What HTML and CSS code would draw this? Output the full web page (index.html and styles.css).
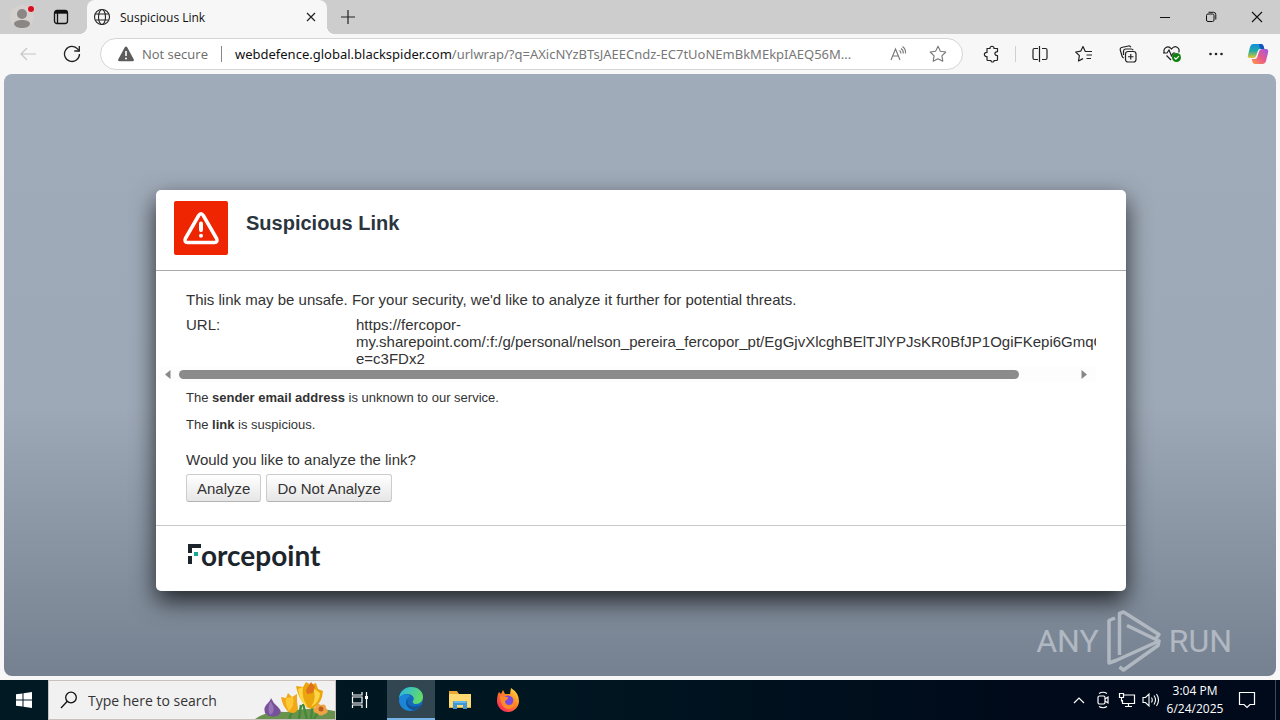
FILE: index.html
```html
<!DOCTYPE html>
<html lang="en">
<head>
<meta charset="utf-8">
<title>Suspicious Link</title>
<link rel="stylesheet" href="styles.css">
</head>
<body>
<header class="tabbar">
  <button class="tab-tool profile" aria-label="Profile"><svg width="26" height="26" viewBox="0 0 26 26"><circle cx="13" cy="13" r="12" fill="#d4d1ce"/><circle cx="13" cy="10" r="5" fill="#8b8785"/><path d="M5 20c0-3 4-4 8-4s8 1 8 4c-1 3-4 4-8 4s-7-1-8-4z" fill="#8b8785"/><circle cx="22" cy="5" r="4" fill="#e3cccc"/><circle cx="22" cy="5" r="3" fill="#d80f20"/></svg></button>
  <button class="tab-tool" aria-label="Tab actions"><svg width="16" height="16" viewBox="0 0 16 16" fill="none" stroke="#111" stroke-width="1.3"><rect x="1.500" y="1.500" width="13" height="13" rx="2.500"/><path d="M2 3.300h12" stroke-width="2.800"/><path d="M4.500 4v10"/></svg></button>
  <div class="tab">
    <svg width="18" height="18" viewBox="0 0 18 18" fill="none" stroke="#222" stroke-width="1.1"><circle cx="9" cy="9" r="7.500"/><ellipse cx="9" cy="9" rx="3.500" ry="7.500"/><path d="M2.300 6h13.400M2.300 12h13.400"/></svg>
    <span class="tab-title">Suspicious Link</span>
    <button class="tab-close" aria-label="Close tab"><svg width="10" height="10" viewBox="0 0 10 10" stroke="#222" stroke-width="1.2"><path d="M1 1l8 8M9 1L1 9"/></svg></button>
  </div>
  <button class="tab-new" aria-label="New tab"><svg width="14" height="14" viewBox="0 0 14 14" stroke="#222" stroke-width="1.2"><path d="M7 0v14M0 7h14"/></svg></button>
  <div class="window-controls">
    <button aria-label="Minimize"><svg width="12" height="12" viewBox="0 0 12 12"><path d="M1 6.500h10" stroke="#111"/></svg></button>
    <button aria-label="Restore"><svg width="12" height="12" viewBox="0 0 12 12" fill="none" stroke="#111"><rect x="1.500" y="3" width="7.500" height="7.500" rx="1.500"/><path d="M3.500 1.300H8.500a2.300 2.300 0 0 1 2.300 2.300V8.500"/></svg></button>
    <button aria-label="Close"><svg width="12" height="12" viewBox="0 0 12 12" stroke="#111" stroke-width="1.100"><path d="M1 1l10 10M11 1L1 11"/></svg></button>
  </div>
</header>

<nav class="toolbar">
  <button class="tool" aria-label="Back" disabled><svg width="16" height="14" viewBox="0 0 16 14" fill="none" stroke="#c6c6c6" stroke-width="1.200"><path d="M16 7H1M7 1L1 7l6 6"/></svg></button>
  <button class="tool" aria-label="Refresh"><svg width="18" height="18" viewBox="0 0 18 18" fill="none" stroke="#222" stroke-width="1.300"><path d="M16.500 9A7.500 7.500 0 1 1 14.800 4.200L16.300 6"/><path d="M16.300 1v5h-5"/></svg></button>
  <div class="address">
    <button class="security"><svg width="16" height="16" viewBox="0 0 16 16"><path d="M8 .5q.8 0 1.200.8l6.500 12q.8 2-1.200 2h-13q-2 0-1.200-2l6.500-12Q7.200.5 8 .5z" fill="#5c5c5c"/><path d="M8 5v5" stroke="#fff" stroke-width="1.600"/><circle cx="8" cy="12.400" r="1" fill="#fff"/></svg><span>Not secure</span></button>
    <span class="address-rule"></span>
    <div class="url" role="textbox" aria-label="Address"><span class="host">webdefence.global.blackspider.com</span>/urlwrap/?q=AXicNYzBTsJAEECndz-EC7tUoNEmBkMEkpIAEQ56M...</div>
    <button class="inline-tool" aria-label="Read aloud"><svg width="17" height="16" viewBox="0 0 17 16" fill="none" stroke="#777" stroke-width="1.100"><path d="M1 14L5.500 3l4.500 11M2.700 10h5.600M9.500 4.500q1.500 1 1.500 3M11 2.500q2.500 1.500 2.300 5M12.500.5q3.500 2.500 3 7"/></svg></button>
    <button class="inline-tool" aria-label="Favorite"><svg width="18" height="18" viewBox="0 0 18 18" fill="none" stroke="#777" stroke-width="1.100" stroke-linejoin="round"><path d="M9 1.300l2.400 4.900 5.400.8-3.900 3.800.9 5.400L9 13.700l-4.800 2.500.9-5.400L1.200 7l5.400-.8z"/></svg></button>
  </div>
  <button class="tool" aria-label="Extensions"><svg width="18" height="18" viewBox="0 0 18 18" fill="none" stroke="#222" stroke-width="1.200" stroke-linejoin="round"><path d="M4 3.500h3c-.5-3 4.500-3 4 0h3.500v3.200c-3.500-.3-3.500 4 0 3.800V14.500q0 1-1 1h-2.500c.5 2-3.500 2-3 0H5q-1 0-1-1v-3c-3.500.5-3.500-4.500 0-4z"/></svg></button>
  <span class="tool-rule"></span>
  <button class="tool" aria-label="Split screen"><svg width="16" height="16" viewBox="0 0 16 16" fill="none" stroke="#222" stroke-width="1.200"><path d="M6 2.500H2.500Q1 2.500 1 4v8q0 1.500 1.500 1.500H6M10 2.500h3.500Q15 2.500 15 4v8q0 1.500-1.500 1.500H10M7.500 0v16"/></svg></button>
  <button class="tool" aria-label="Favorites"><svg width="18" height="18" viewBox="0 0 18 18" fill="none" stroke="#222" stroke-width="1.200" stroke-linejoin="round"><path d="M17 6.500h-6.700L8 1.500 5.700 6.200l-5 .8 3.700 3.600-.9 5.400L8 13.600M11.500 10H17M11.500 13.500H16"/></svg></button>
  <button class="tool" aria-label="Collections"><svg width="18" height="18" viewBox="0 0 18 18" fill="none" stroke="#222" stroke-width="1.200"><rect x="6.500" y="6.500" width="10.500" height="10.500" rx="2.500"/><path d="M11.750 9v5.500M9 11.750h5.500M4.800 13Q3.500 12.700 3 11L1.200 4.800Q1 3 2.500 2.500L9.500 1q1.800-.2 2.300 1.300M4.500 10V6q.2-1.700 2-2h5.700q1.500.1 2 1.200"/></svg></button>
  <button class="tool" aria-label="Browser essentials"><svg width="18" height="18" viewBox="0 0 18 18" fill="none" stroke="#222" stroke-width="1.200"><path d="M1.400 8C-.5 3 5-.5 8.500 4 12-.5 17.500 2.500 15.700 7.500M3.500 10.500l4.500 4.500M0 8h4l2-3 2.500 6 1.800-3h2"/><circle cx="13.500" cy="12.500" r="4.500" fill="#118011" stroke="none"/><path d="M11.300 12.500l1.600 1.600 3-3" stroke="#fff"/></svg></button>
  <button class="tool" aria-label="Settings and more"><svg width="16" height="4" viewBox="0 0 16 4" fill="#222"><circle cx="2.500" cy="2" r="1.300"/><circle cx="8" cy="2" r="1.300"/><circle cx="13.500" cy="2" r="1.300"/></svg></button>
  <button class="tool copilot" aria-label="Copilot"><svg width="22" height="22" viewBox="0 0 22 22"><defs><linearGradient id="ca" x1="0" y1="0" x2="0" y2="1"><stop offset="0" stop-color="#168ee0"/><stop offset=".5" stop-color="#22a9a4"/><stop offset="1" stop-color="#e5c72d"/></linearGradient><linearGradient id="cb" x1="1" y1="0" x2="0" y2="1"><stop offset="0" stop-color="#9a59e8"/><stop offset=".5" stop-color="#e8588c"/><stop offset="1" stop-color="#ff9a45"/></linearGradient></defs><path d="M6 1h8q2 0 2.500 2l.8 3h-4q-2 0-2.500 2l-1.700 5q-.8 2-3 2H3q-3 0-2-3L3 4q.8-3 3-3z" fill="url(#ca)"/><path d="M12 1h2q2 0 2.500 2l.8 3h-3Q13 6 12.500 4z" fill="#1554c0"/><path d="M16 21H8q-2 0-2.500-2l-.8-3h3q2 0 2.600-2L12 8.500Q12.800 6 15 6h4q3 0 2 4l-2 8q-.8 3-3 3z" fill="url(#cb)"/></svg></button>
</nav>

<main class="viewport">
  <section class="card">
    <header class="card-head">
      <svg class="alert-icon" width="54" height="54" viewBox="0 0 54 54"><rect width="54" height="54" rx="2" fill="#ef2400"/><path d="M24.700 14.500q2.300-3.500 4.600 0l13.300 23q1.600 3.700-2.300 4H13.700q-3.900-.3-2.300-4z" fill="none" stroke="#fff" stroke-width="3.500" stroke-linejoin="round"/><path d="M27 22.500v6.500" stroke="#fff" stroke-width="4" stroke-linecap="round"/><circle cx="27" cy="34.800" r="2" fill="#fff"/></svg>
      <h1>Suspicious Link</h1>
    </header>
    <div class="card-body">
      <p class="lead">This link may be unsafe. For your security, we'd like to analyze it further for potential threats.</p>
      <div class="scroll-box">
        <dl class="url-row"><dt>URL:</dt><dd>https://fercopor-<br>my.sharepoint.com/:f:/g/personal/nelson_pereira_fercopor_pt/EgGjvXlcghBElTJlYPJsKR0BfJP1OgiFKepi6GmqQ<br>e=c3FDx2</dd></dl>
        <div class="scrollbar"><svg width="6" height="9" viewBox="0 0 6 9"><path d="M5.500 0v9L0 4.500z" fill="#888"/></svg><div class="track"><div class="thumb"></div></div><svg width="6" height="9" viewBox="0 0 6 9"><path d="M.5 0v9L6 4.500z" fill="#888"/></svg></div>
      </div>
      <div class="notes">
        <p>The <b>sender email address</b> is unknown to our service.</p>
        <p>The <b>link</b> is suspicious.</p>
      </div>
      <p class="question">Would you like to analyze the link?</p>
      <div class="actions"><button>Analyze</button><button>Do Not Analyze</button></div>
    </div>
    <footer class="card-foot">
      <div class="brand" role="img" aria-label="Forcepoint"><svg width="13" height="21" viewBox="0 0 13 21"><path d="M0 0h13v4H4v5H0zM0 12h4v8H0z" fill="#1d252c"/><rect x="6" y="8" width="4" height="4" fill="#16a893"/></svg><span>orcepoint</span></div>
    </footer>
  </section>
  <div class="watermark"><span>ANY</span><svg width="54" height="62" viewBox="0 0 54 62" fill="none" stroke="#c3c9d1" stroke-width="3.500" stroke-linejoin="round"><path d="M8 8L2 10.500V53l7-2.500 43-19.500L20 15.500M12.500 45V3.500l4-1.500L52 24.500l-3 4M12.500 57l4 3L51 35.500l1-4.500"/></svg><span>RUN</span></div>
</main>

<footer class="taskbar">
  <button class="start" aria-label="Start"><svg width="16" height="16" viewBox="0 0 16 16" fill="#fff"><path d="M0 2.300l6.500-.9v6.100H0zM7.500 1.200L16 0v7.500H7.500zM0 8.500h6.500v6.100L0 13.700zM7.500 8.500H16V16l-8.500-1.200z"/></svg></button>
  <div class="search">
    <svg width="18" height="18" viewBox="0 0 18 18" fill="none" stroke="#111" stroke-width="1.300"><circle cx="11" cy="6.500" r="5.300"/><path d="M7.300 10.300L1 17"/></svg>
    <input type="text" placeholder="Type here to search" aria-label="Type here to search">
    <svg class="flowers" width="80" height="38" viewBox="0 0 80 38"><path d="M0 38q12-9 31-7 25-6 49-1v8z" fill="#68924e"/><path d="M44 38l2-14M56 38l2-17M35 38q-1-6 7-10M65 30q-3 2-6 8M48 23l4 15" fill="none" stroke="#438b38" stroke-width="2.500"/><path d="M16 17q2 5 7 9 6 6-1 9-8 2-12-3-2-6 3-10 3-3 3-5z" fill="#76529b"/><path d="M15 21q-3 8 0 13 7-4 1-13z" fill="#9975b8"/><path d="M26 16l5 1 2-5 4 4 5-3v7l1 8q-3 6-9 3-6-4-8-15z" fill="#f2a719"/><path d="M31 17q-1 8 3 13 6-5 4-14z" fill="#fdc735"/><path d="M41 5l7 1 3-5 5 3 5-2 2 6 5 2q-1 12-9 17-6 2-10-4-6-7-8-18z" fill="#eaa50f"/><path d="M48 6q-2 11 5 20-8-3-10-18zM57 6q6 10-1 20 9-5 9-14z" fill="#ffd644"/><path d="M51 9l5-8 4 5-2 6-6 1z" fill="#df731b"/><path d="M59 31q-2-4 2-5 1-5 5-2 5-2 5 3 4 4-1 6-5 3-7 0z" fill="#eda444"/><circle cx="66" cy="28" r="2.500" fill="#bd5c20"/></svg>
  </div>
  <button class="task" aria-label="Task view"><svg width="18" height="18" viewBox="0 0 18 18" fill="none" stroke="#fff" stroke-width="1.200"><path d="M1.500 1v3H11V1M1.500 17v-3H11v3M1.500 6H11v6H1.500zM15.500 1v16"/><path d="M14 5h3v3h-3z" fill="#fff" stroke="none"/></svg></button>
  <button class="task active" aria-label="Edge"><svg width="24" height="24" viewBox="0 0 24 24"><defs><linearGradient id="ea" x1="0" y1="0" x2="1" y2=".4"><stop offset="0" stop-color="#26b5e8"/><stop offset="1" stop-color="#62d96b"/></linearGradient></defs><circle cx="12" cy="12" r="12" fill="#1369bd"/><path d="M0 11C1 4 6 0 12 0c8 0 12 5 12 10 0 4-3 7-7 7-3 0-4-2-3-3 4-5-7-11-14-3z" fill="url(#ea)"/><path d="M9 11c-5 5 0 12 6 12-8 3-15-3-15-10C1 7 8 6 11 9z" fill="#1b86d8"/><path d="M9 11c-3 7 4 11 13 7-2 3-5 5-8 5-6-1-9-8-5-12z" fill="#145292"/></svg></button>
  <button class="task" aria-label="File Explorer"><svg width="22" height="20" viewBox="0 0 22 20"><path d="M0 1h8l2 3h12v14H0z" fill="#e9a937"/><path d="M0 4h22v13H0z" fill="#ffda72"/><path d="M4 19v-7q0-1 1-1h12q1 0 1 1v7h-4v-4H8v4z" fill="#3d99d4"/><path d="M5 11h12v2H5z" fill="#64b9e9"/></svg></button>
  <button class="task" aria-label="Firefox"><svg width="24" height="24" viewBox="0 0 24 24"><defs><linearGradient id="fa" x1="1" y1="0" x2=".2" y2="1"><stop offset="0" stop-color="#fff04b"/><stop offset=".45" stop-color="#ff8b22"/><stop offset="1" stop-color="#f9235d"/></linearGradient></defs><path d="M2 6l1-2 2 2 2-4 2 4h5l1-6q8 5 8 13c0 6-5 11-11 11S1 19 1 13q0-4 1-7z" fill="url(#fa)"/><circle cx="12" cy="13" r="5.500" fill="#774be0"/><path d="M4 8l7 1q3 1-2 4 0 4 4 4 5 0 4-6 4 9-4 10Q5 21 4 8z" fill="#ff8a29"/></svg></button>
  <div class="tray">
    <button aria-label="Show hidden icons"><svg width="12" height="8" viewBox="0 0 12 8" fill="none" stroke="#fff" stroke-width="1.200"><path d="M1 7l5-5 5 5"/></svg></button>
    <button aria-label="Meet now"><svg width="14" height="18" viewBox="0 0 14 18" fill="none" stroke="#fff" stroke-width="1.200"><rect x="2" y="5" width="7" height="8" rx="1.500"/><path d="M9 8l3-2v6l-3-2M3 2.500q4-2.500 8 0M3 15.500q4 2.500 8 0"/></svg></button>
    <button aria-label="Network"><svg width="18" height="16" viewBox="0 0 18 16" fill="none" stroke="#fff" stroke-width="1.200"><path d="M6 3h10.500v8.500h-12V8M10.500 12v3M7 14.500h7M1.500 1.500h4v4h-4zM3.500 6v3h1"/></svg></button>
    <button aria-label="Volume"><svg width="18" height="16" viewBox="0 0 18 16" fill="none" stroke="#fff" stroke-width="1.100"><path d="M1 5.500h2.500L7 2v12l-3.500-3.500H1zM9.500 5.500q1.500 2.500 0 5M12 3.500q3 4.500 0 9M14.500 2q4 6 0 12"/></svg></button>
    <button class="clock"><span>3:04 PM</span><span>6/24/2025</span></button>
    <button class="notice" aria-label="Notifications"><svg width="18" height="18" viewBox="0 0 18 18" fill="none" stroke="#fff" stroke-width="1.200"><path d="M1.500 1.500h15v12h-4.500L9 16.500l-3-3H1.500z"/></svg></button>
  </div>
</footer>
</body>
</html>
```
FILE: styles.css
```css
* { box-sizing: border-box; }
body {
  margin: 0;
  min-height: 100vh;
  display: flex;
  flex-direction: column;
  background: #f7f7f7;
  color: #222;
  font-family: "Open Sans", "Noto Sans", sans-serif;
  font-size: 13px;
}
button {
  display: flex;
  align-items: center;
  justify-content: center;
  padding: 0;
  border: 0;
  background: none;
  color: inherit;
  font: inherit;
}
svg { display: block; flex: none; }

.tabbar { display: flex; height: 34px; padding-left: 2px; background: #cdcdcd; }
.tab-tool { width: 38px; }
.profile { width: 40px; }
.tab {
  position: relative;
  display: flex;
  align-items: center;
  gap: 9px;
  width: 240px;
  margin-left: 7px;
  padding: 0 6px;
  background: #f7f7f7;
  border-radius: 8px 8px 0 0;
}
.tab::before, .tab::after {
  content: "";
  position: absolute;
  bottom: 0;
  width: 8px;
  height: 8px;
}
.tab::before { left: -8px; background: radial-gradient(circle at 0 0, transparent 8px, #f7f7f7 8px); }
.tab::after { right: -8px; background: radial-gradient(circle at 100% 0, transparent 8px, #f7f7f7 8px); }
.tab-title { flex: 1; font-size: 12px; color: #111; }
.tab-close { width: 20px; height: 20px; }
.tab-new { width: 42px; }
.window-controls { display: flex; margin-left: auto; }
.window-controls button { width: 46px; }

.toolbar { display: flex; align-items: center; height: 40px; padding: 0 2px 0 6px; }
.tool { width: 44px; height: 32px; }
.copilot { width: 40px; }
.tool-rule { width: 1px; height: 16px; margin: 0 2px 0 1px; background: #cfcfcf; }
.address {
  display: flex;
  align-items: center;
  flex: 1;
  min-width: 0;
  height: 32px;
  margin: 0 7px 0 6px;
  padding: 0 4px 0 17px;
  background: #fff;
  border: 1px solid #d5d5d5;
  border-radius: 16px;
}
.security { gap: 8px; color: #6b6b6b; }
.address-rule { width: 1px; height: 16px; margin: 0 13px; background: #888; }
.url {
  flex: 1;
  min-width: 0;
  overflow: hidden;
  white-space: nowrap;
  color: #777;
  font-family: "Noto Sans", sans-serif;
}
.host { color: #111; }
.inline-tool { width: 40px; height: 28px; }

.viewport {
  position: relative;
  flex: 1;
  margin: 0 4px 4px;
  padding: 116px 20px 80px 22px;
  border-radius: 8px;
  background: linear-gradient(#a0abb9 0%, #9ea9b7 55%, #758190 100%);
}
.card {
  max-width: 970px;
  margin: 0 auto;
  background: #fff;
  border-radius: 5px;
  box-shadow: 0 10px 24px rgba(0, 0, 0, .75);
  color: #333;
  font-family: "Liberation Sans", Arial, sans-serif;
  font-size: 15px;
  line-height: 17px;
}
.card-head {
  display: flex;
  gap: 18px;
  height: 81px;
  padding: 11px 18px;
  border-bottom: 1px solid #aaa;
}
.card-head h1 { margin: 10px 0 0; font-size: 20px; line-height: 24px; color: #2b353e; }
.card-body { padding: 20px 30px 23px; }
.card-body p { margin: 0; }
.scroll-box { margin: 8px 0 0 -30px; overflow: hidden; }
.url-row { display: flex; margin: 0; padding-left: 30px; }
.url-row dt { flex: none; width: 170px; }
.url-row dd { margin: 0; white-space: nowrap; }
.scrollbar { display: flex; align-items: center; gap: 8px; height: 15px; padding: 0 9px; background: #fdfdfd; }
.track { flex: 1; }
.thumb { width: 94%; height: 9px; border-radius: 5px; background: #8b8b8b; }
.notes { display: grid; gap: 10px; margin-top: 7px; font-size: 13px; }
.card-body .question { margin-top: 18px; }
.actions { display: flex; gap: 5px; margin-top: 6px; }
.actions button {
  height: 28px;
  padding: 0 10px;
  border: 1px solid #ccc;
  border-bottom-color: #b3b3b3;
  border-radius: 3px;
  background: linear-gradient(#fff, #e6e6e6);
}
.card-foot { padding: 18px 32px 22px; border-top: 1px solid #c8c8c8; }
.brand {
  display: flex;
  height: 25px;
  color: #1d252c;
  font-family: Lato, sans-serif;
  font-size: 28px;
  font-weight: 700;
  line-height: 22px;
}
.watermark {
  position: absolute;
  right: 44px;
  bottom: 4px;
  display: flex;
  align-items: center;
  gap: 8px;
  color: #c3c9d1;
  font-family: Roboto, sans-serif;
  font-size: 32px;
  line-height: 40px;
  opacity: .75;
}

.taskbar {
  display: flex;
  height: 40px;
  background: linear-gradient(90deg, #001922, #001722 40%, #000a1a 80%);
  color: #fff;
}
.start { width: 48px; }
.search {
  display: flex;
  align-items: center;
  gap: 10px;
  width: 288px;
  padding-left: 11px;
  background: #f1f1f1;
  border: 1px solid #c9bfbd;
}
.search input {
  flex: 1;
  min-width: 0;
  padding: 0;
  border: 0;
  outline: 0;
  background: none;
  font: 14px "Open Sans", "Noto Sans", sans-serif;
}
.search input::placeholder { color: #333; opacity: 1; }
.task { width: 48px; }
.task.active { margin: 0 1px 0 3px; background: #314650; border-bottom: 2px solid #76b4e8; }
.tray { display: flex; margin-left: auto; padding-right: 4px; }
.tray button { width: 24px; }
.tray .clock { flex-direction: column; width: 64px; font-size: 12px; line-height: 18px; }
.tray .notice { width: 49px; padding-right: 8px; border-right: 1px solid #445; }
```
